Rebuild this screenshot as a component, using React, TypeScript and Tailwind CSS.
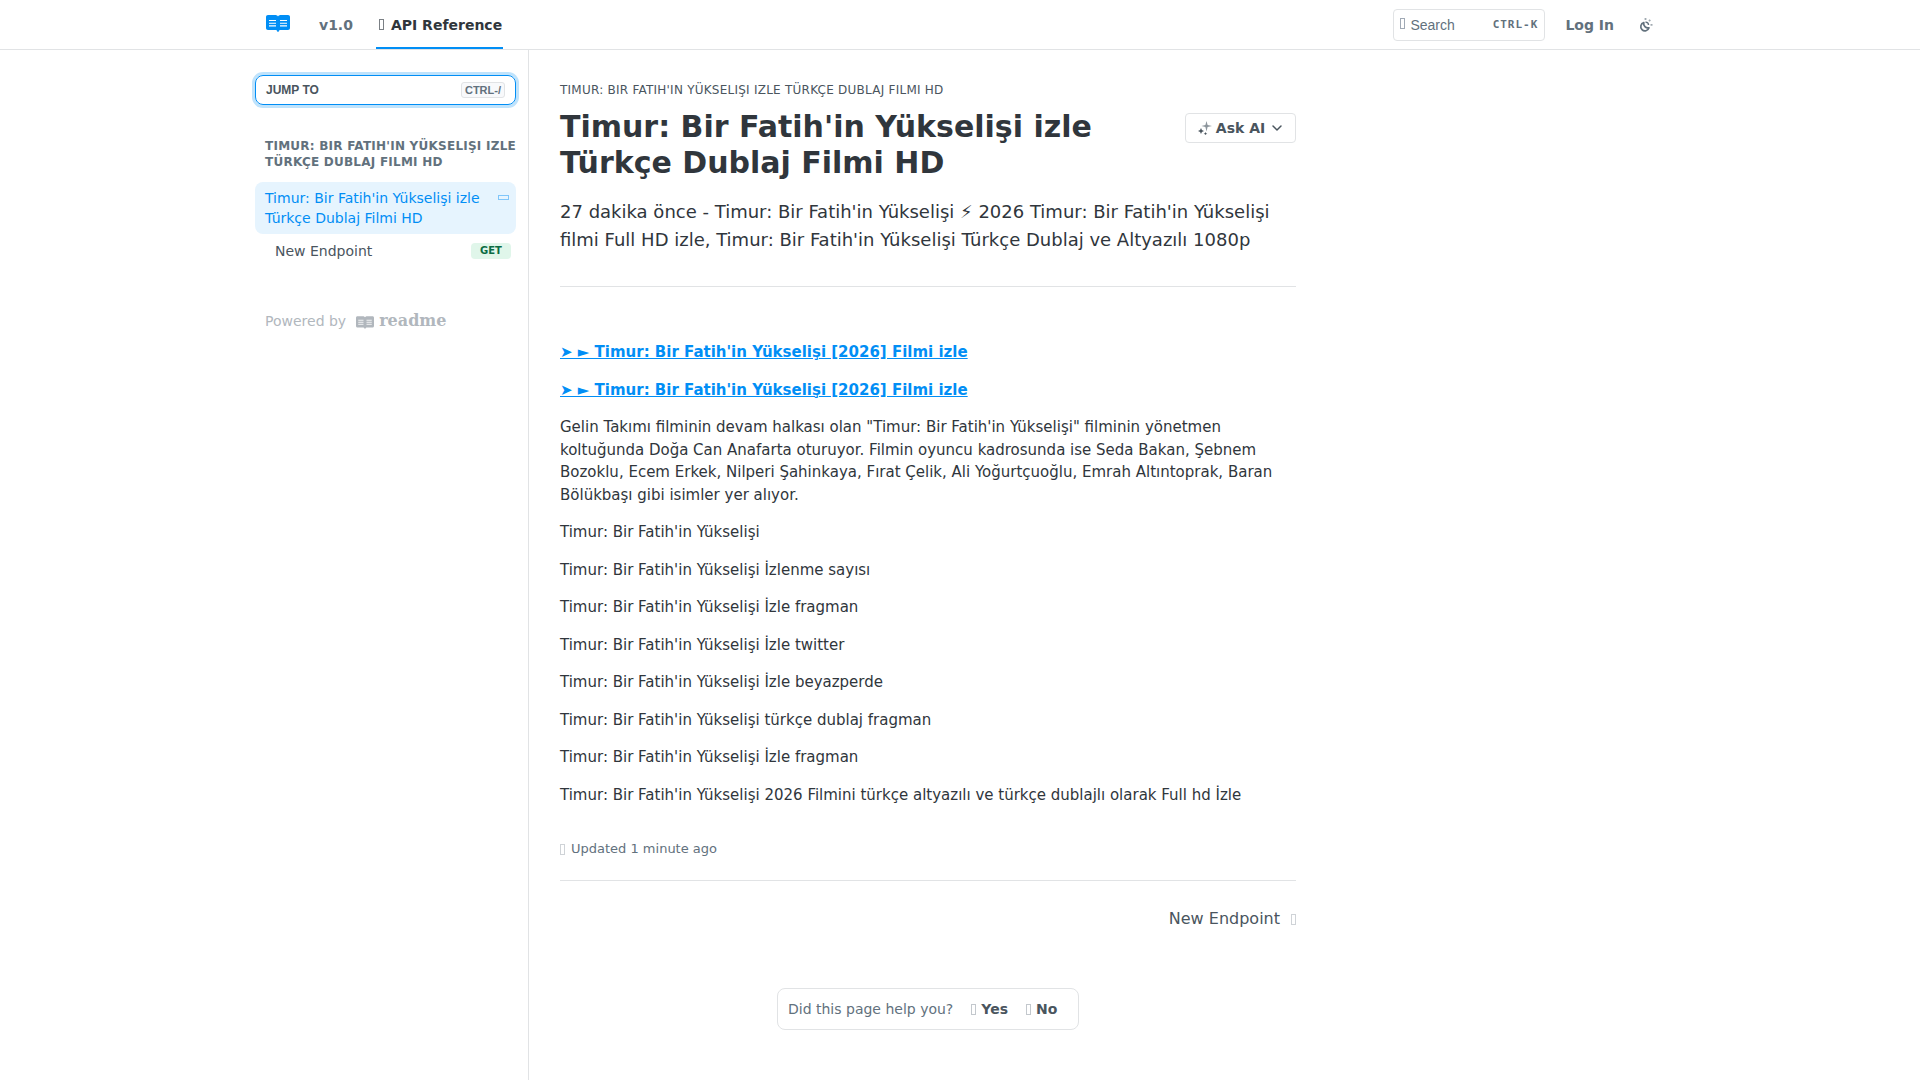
import { clsx } from 'clsx'

const PAGE_TITLE = "Timur: Bir Fatih'in Yükselişi izle Türkçe Dublaj Filmi HD"
const CATEGORY = "TIMUR: BIR FATIH'IN YÜKSELIŞI IZLE TÜRKÇE DUBLAJ FILMI HD"

const links = [
  { id: 1, label: "➤ ► Timur: Bir Fatih'in Yükselişi [2026] Filmi izle" },
  { id: 2, label: "➤ ► Timur: Bir Fatih'in Yükselişi [2026] Filmi izle" },
]

const paragraphs = [
  "Gelin Takımı filminin devam halkası olan \"Timur: Bir Fatih'in Yükselişi\" filminin yönetmen koltuğunda Doğa Can Anafarta oturuyor. Filmin oyuncu kadrosunda ise Seda Bakan, Şebnem Bozoklu, Ecem Erkek, Nilperi Şahinkaya, Fırat Çelik, Ali Yoğurtçuoğlu, Emrah Altıntoprak, Baran Bölükbaşı gibi isimler yer alıyor.",
  "Timur: Bir Fatih'in Yükselişi",
  "Timur: Bir Fatih'in Yükselişi İzlenme sayısı",
  "Timur: Bir Fatih'in Yükselişi İzle fragman",
  "Timur: Bir Fatih'in Yükselişi İzle twitter",
  "Timur: Bir Fatih'in Yükselişi İzle beyazperde",
  "Timur: Bir Fatih'in Yükselişi türkçe dublaj fragman",
  "Timur: Bir Fatih'in Yükselişi İzle fragman",
  "Timur: Bir Fatih'in Yükselişi 2026 Filmini türkçe altyazılı ve türkçe dublajlı olarak Full hd İzle",
]

// Empty box used wherever an icon glyph goes
function GlyphBox({ className }: { className?: string }) {
  return <span aria-hidden="true" className={clsx('inline-block h-[11px] w-[5px] shrink-0 border', className)} />
}

function BookIcon({ className }: { className?: string }) {
  return (
    <svg viewBox="0 0 24 17" className={className} aria-hidden="true">
      <path
        fill="currentColor"
        d="M2 0H9c1.500 0 2.500.5 3 1.500C12.500.5 13.500 0 15 0h7c1.200 0 2 .8 2 2v11c0 1.200-.8 2-2 2h-7c-1.300 0-2.100.4-2.400 1.400-.1.400-.3.600-.6.600s-.5-.2-.6-.6C11.100 15.400 10.300 15 9 15H2c-1.200 0-2-.8-2-2V2C0 .8.8 0 2 0z"
      />
      <path stroke="white" strokeWidth="1.100" d="M3 5.500h7M3 8.200h7M3 10.900h7M14 5.500h7M14 8.200h7M14 10.900h7" />
    </svg>
  )
}

function ThemeIcon() {
  return (
    <svg viewBox="0 0 16 16" className="size-4" fill="none" aria-hidden="true">
      <path
        stroke="#62717d"
        strokeWidth="1.700"
        strokeLinejoin="round"
        d="M5.800 5.600a4.200 4.200 0 1 0 5.200 5.200A4.300 4.300 0 0 1 5.800 5.600z"
      />
      <path stroke="#62717d" strokeWidth="1.500" d="M7.500 5.200c1.600-.3 3 1 3 2.800" />
      <path stroke="#62717d" strokeOpacity=".6" strokeWidth="1.800" d="M7.500 1v2M12.300 2.800L11 4.100M12.500 7.800h2" />
    </svg>
  )
}

function SparkleIcon() {
  return (
    <svg viewBox="0 0 14 14" className="size-[14px]" aria-hidden="true">
      <path fill="#8c959c" d="M8.500 0l1.100 3.900 4.400 1.100-4.400 1.100-1.100 4.400-1.100-4.400L3.500 5l3.900-1.100z" />
      <path fill="#4a555e" d="M3 7l.9 2.100L6 10l-2.100.9L3 13l-.9-2.100L0 10l2.100-.9zM7.500 11l.6 1.200 1.200.6-1.200.5-.6.700-.6-.7-1.200-.5 1.200-.6z" />
    </svg>
  )
}

function Header() {
  return (
    <header className="border-b border-[#e1e3e5]">
      <div className="mx-auto flex h-[49px] max-w-[1440px] items-center justify-between px-[26px]">
        <div className="flex h-full items-center">
          <a href="#" aria-label="Home" className="mr-[29px] pb-[2px] text-[#018ef5]">
            <BookIcon className="h-[17px] w-6" />
          </a>
          <a href="#" className="mr-[23px] text-sm font-bold text-[#62717d]">
            v1.0
          </a>
          <a
            href="#"
            className="flex h-full items-center gap-[7px] border-y-2 border-t-transparent border-b-[#018ef5] pr-px pl-[3px] text-sm font-bold text-[#30363c]"
          >
            <GlyphBox className="border-[#7b8085]" />
            API Reference
          </a>
        </div>
        <div className="flex items-center">
          <button className="mr-5 flex h-8 w-[152px] items-center rounded border border-[#e1e3e5] px-[6px] font-['Liberation_Sans',sans-serif] text-sm text-[#62717d]">
            <GlyphBox className="mr-[5px] mb-[2px] border-[#a0a9b5]" />
            Search
            <span className="ml-auto font-['DejaVu_Sans_Mono',monospace] text-[11px] font-bold tracking-[1px]">CTRL-K</span>
          </button>
          <a href="#" className="mr-6 text-sm font-bold text-[#62717d]">
            Log In
          </a>
          <button aria-label="Toggle theme">
            <ThemeIcon />
          </button>
        </div>
      </div>
    </header>
  )
}

function Sidebar() {
  return (
    <nav className="w-[289px] shrink-0 border-r border-[#e1e3e5] pt-[25px] pr-3 pl-[15px]">
      <button className="flex h-[30px] w-full items-center justify-between rounded-lg border border-[#018ef5] px-[10px] font-['Liberation_Sans',sans-serif] text-xs font-bold text-[#4a555e] ring-3 ring-[#018ef5]/25">
        JUMP TO
        <span className="rounded-[3px] border border-[#e1e3e5] bg-[#f8f9fb] px-[3px] text-[11px] leading-[14px] text-[#62717d]">CTRL-/</span>
      </button>

      <h2 className="mt-[33px] -mr-1 pl-[10px] text-xs leading-4 font-bold tracking-[0.02em] text-[#62717d]">{CATEGORY}</h2>

      <ul className="mt-3 text-sm leading-5">
        <li>
          <a href="#" className="flex justify-between gap-3 rounded-lg bg-[#e6f4fe] py-[6px] pr-[7px] pl-[10px] text-[#018ef5]">
            {PAGE_TITLE}
            <span aria-hidden="true" className="mt-[7px] h-[5px] w-[11px] shrink-0 border border-[#80c6fa]" />
          </a>
        </li>
        <li>
          <a href="#" className="flex items-center justify-between py-[7px] pr-[5px] pl-5 text-[#4a555e]">
            New Endpoint
            <span className="w-10 rounded bg-[#e0f6ea] text-center text-[10px] leading-4 font-bold text-[#0b6b43]">GET</span>
          </a>
        </li>
      </ul>

      <a href="#" className="mt-[43px] flex items-center pl-[10px] text-sm text-[#b1b7bd]">
        Powered by
        <BookIcon className="mt-[3px] mr-[5px] ml-[10px] h-[13px] w-[18px]" />
        <span className="font-['DejaVu_Serif',serif] text-base leading-5 font-bold">readme</span>
      </a>
    </nav>
  )
}

function Article() {
  return (
    <main className="w-full max-w-[798px] px-[31px] pt-[31px] pb-[50px] text-[#30363c]">
      <p className="text-xs leading-[18px] tracking-[0.02em] text-[#4a555e]">{CATEGORY}</p>

      <div className="mt-[10px] flex items-start justify-between gap-8">
        <h1 className="max-w-[600px] text-[30px] leading-9 font-bold">{PAGE_TITLE}</h1>
        <button className="mt-1 flex h-[30px] w-[111px] shrink-0 items-center justify-center rounded border border-[#e1e3e5] text-sm font-bold text-[#4a555e]">
          <SparkleIcon />
          <span className="mr-[6px] ml-1">Ask AI</span>
          <svg viewBox="0 0 12 12" className="size-3" fill="none" stroke="currentColor" strokeWidth="1.500" aria-hidden="true">
            <path strokeLinecap="round" strokeLinejoin="round" d="M2 4l4 4 4-4" />
          </svg>
        </button>
      </div>

      <p className="mt-[17px] text-lg leading-7">
        27 dakika önce - Timur: Bir Fatih'in Yükselişi ⚡ 2026 Timur: Bir Fatih'in Yükselişi filmi Full HD izle, Timur: Bir
        Fatih'in Yükselişi Türkçe Dublaj ve Altyazılı 1080p
      </p>

      <hr className="mt-8 border-[#e1e3e5]" />

      <div className="mt-[54px] flex flex-col gap-[15px] text-[15px] leading-[1.5]">
        {links.map((link) => (
          <p key={link.id}>
            <a href="#" className="font-bold text-[#018ef5] underline">
              {link.label}
            </a>
          </p>
        ))}
        {paragraphs.map((text, i) => (
          <p key={i}>{text}</p>
        ))}
      </div>

      <p className="mt-[33px] flex items-center gap-[6px] text-[13px] leading-5 text-[#62717d]">
        <GlyphBox className="border-[#cfd3d7]" />
        Updated 1 minute ago
      </p>

      <hr className="mt-[21px] border-[#e1e3e5]" />

      <div className="mt-[26px] flex justify-end">
        <a href="#" className="flex items-center gap-[11px] text-base leading-6 text-[#4a555e]">
          New Endpoint
          <GlyphBox className="border-[#cfd3d7]" />
        </a>
      </div>

      <div className="mt-[57px] flex justify-center">
        <div className="flex h-[42px] w-[302px] items-center rounded-lg border border-[#e1e3e5] pl-[10px] text-sm text-[#62717d]">
          Did this page help you?
          <button className="ml-[18px] flex items-center gap-[5px] font-bold text-[#4a555e]">
            <GlyphBox className="border-[#c3c8cd]" />
            Yes
          </button>
          <button className="ml-[18px] flex items-center gap-[5px] font-bold text-[#4a555e]">
            <GlyphBox className="border-[#c3c8cd]" />
            No
          </button>
        </div>
      </div>
    </main>
  )
}

export default function App() {
  return (
    <div className="flex min-h-screen flex-col bg-white font-['DejaVu_Sans',sans-serif]">
      <Header />
      <div className="mx-auto flex w-full max-w-[1440px] grow">
        <Sidebar />
        <Article />
      </div>
    </div>
  )
}
